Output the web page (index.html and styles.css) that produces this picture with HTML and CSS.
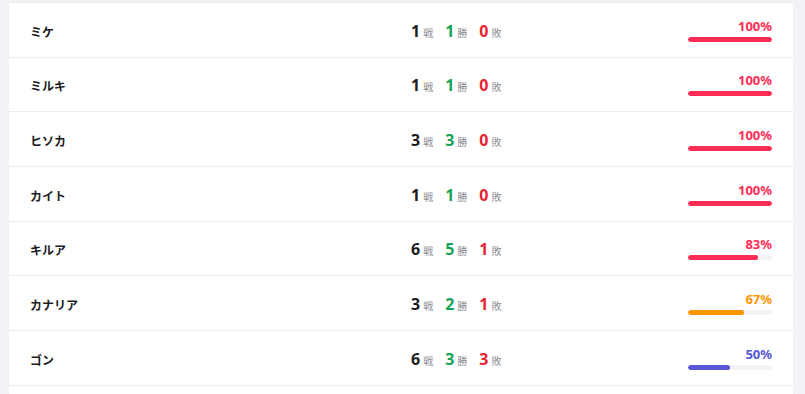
FILE: index.html
```html
<!DOCTYPE html>
<html lang="ja">
<head>
<meta charset="utf-8">
<link rel="stylesheet" href="styles.css">
</head>
<body>
<div class="card">
  <div class="row">
    <div class="name">ミケ</div>
    <div class="stats"><span class="num">1</span><span class="unit">戦</span><span class="num win">1</span><span class="unit">勝</span><span class="num lose">0</span><span class="unit">敗</span></div>
    <div class="rate red"><div class="pct">100%</div><div class="track"><div class="fill" style="width:100%"></div></div></div>
  </div>
  <div class="row">
    <div class="name">ミルキ</div>
    <div class="stats"><span class="num">1</span><span class="unit">戦</span><span class="num win">1</span><span class="unit">勝</span><span class="num lose">0</span><span class="unit">敗</span></div>
    <div class="rate red"><div class="pct">100%</div><div class="track"><div class="fill" style="width:100%"></div></div></div>
  </div>
  <div class="row">
    <div class="name">ヒソカ</div>
    <div class="stats"><span class="num">3</span><span class="unit">戦</span><span class="num win">3</span><span class="unit">勝</span><span class="num lose">0</span><span class="unit">敗</span></div>
    <div class="rate red"><div class="pct">100%</div><div class="track"><div class="fill" style="width:100%"></div></div></div>
  </div>
  <div class="row">
    <div class="name">カイト</div>
    <div class="stats"><span class="num">1</span><span class="unit">戦</span><span class="num win">1</span><span class="unit">勝</span><span class="num lose">0</span><span class="unit">敗</span></div>
    <div class="rate red"><div class="pct">100%</div><div class="track"><div class="fill" style="width:100%"></div></div></div>
  </div>
  <div class="row">
    <div class="name">キルア</div>
    <div class="stats"><span class="num">6</span><span class="unit">戦</span><span class="num win">5</span><span class="unit">勝</span><span class="num lose">1</span><span class="unit">敗</span></div>
    <div class="rate red"><div class="pct">83%</div><div class="track"><div class="fill" style="width:83%"></div></div></div>
  </div>
  <div class="row">
    <div class="name">カナリア</div>
    <div class="stats"><span class="num">3</span><span class="unit">戦</span><span class="num win">2</span><span class="unit">勝</span><span class="num lose">1</span><span class="unit">敗</span></div>
    <div class="rate orange"><div class="pct">67%</div><div class="track"><div class="fill" style="width:67%"></div></div></div>
  </div>
  <div class="row">
    <div class="name">ゴン</div>
    <div class="stats"><span class="num">6</span><span class="unit">戦</span><span class="num win">3</span><span class="unit">勝</span><span class="num lose">3</span><span class="unit">敗</span></div>
    <div class="rate purple"><div class="pct">50%</div><div class="track"><div class="fill" style="width:50%"></div></div></div>
  </div>
  <div class="tail"></div>
</div>
</body>
</html>
```

FILE: styles.css
```css
html, body {
  margin: 0;
  padding: 0;
  background: #f2f2f7;
  height: 394px;
  overflow: hidden;
}
body {
  font-family: "Noto Sans", "Noto Sans CJK JP", sans-serif;
  color: #1c1c1e;
}
.card {
  margin: 2px 12px 0 9px;
  background: #ffffff;
  border-top: 1px solid #ececf0;
  box-shadow: 0 0 2px rgba(0, 0, 0, 0.04);
}
.row {
  box-sizing: border-box;
  height: 54.67px;
  border-bottom: 1px solid #ececf0;
  display: grid;
  grid-template-columns: 381px 1fr 84px;
  align-items: center;
  padding: 0 21px;
}
.tail {
  height: 20px;
}
.name {
  font-family: "Noto Sans CJK JP", sans-serif;
  font-weight: 700;
  font-size: 12px;
  color: #1c1c1e;
  padding-top: 3px;
}
.stats {
  display: flex;
  align-items: baseline;
  padding-top: 2px;
}
.num {
  font-family: "Noto Sans", sans-serif;
  font-weight: 700;
  font-size: 16px;
  color: #1c1c1e;
  margin-right: 3px;
}
.unit {
  font-family: "Noto Sans CJK JP", sans-serif;
  font-size: 10px;
  color: #8e8e93;
  margin-right: 12px;
}
.num.win { color: #17a355; }
.num.lose { color: #e8232f; }
.rate {
  display: flex;
  flex-direction: column;
  align-items: flex-end;
  gap: 3px;
  padding-top: 0;
}
.pct {
  font-family: "Noto Sans", sans-serif;
  font-weight: 700;
  font-size: 13px;
  line-height: 16px;
}
.track {
  width: 84px;
  height: 5px;
  border-radius: 3px;
  background: #f2f2f7;
  overflow: hidden;
}
.fill {
  height: 100%;
  border-radius: 3px;
}
.red .pct { color: #ff2d55; }
.red .fill { background: #ff2d55; }
.orange .pct { color: #ff9500; }
.orange .fill { background: #ff9500; }
.purple .pct { color: #5856d6; }
.purple .fill { background: #5856d6; }
```
